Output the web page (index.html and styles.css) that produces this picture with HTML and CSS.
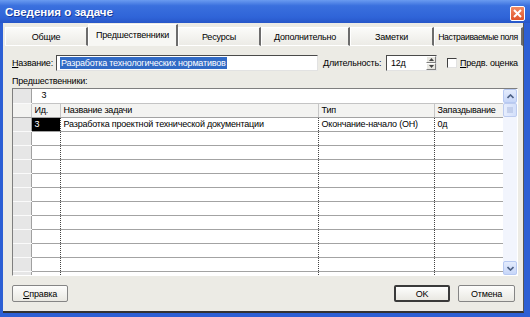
FILE: index.html
```html
<!DOCTYPE html>
<html lang="ru">
<head>
    <meta charset="UTF-8">
    <meta name="viewport" content="width=device-width, initial-scale=1.0">
    <title>Сведения о задаче</title>
    <link rel="stylesheet" href="styles.css">
</head>
<body>
    <div class="window">
        <div class="titlebar">
            <h1>Сведения о задаче</h1>
            <button class="close-button">
                <svg width="9" height="9" viewBox="0 0 9 9"><path d="M1 1L8 8M8 1L1 8" stroke="#fff" stroke-width="2"/></svg>
            </button>
        </div>
        <div class="client">
            <div class="tabs">
                <div class="tab tab-general">Общие</div>
                <div class="tab tab-pred active">Предшественники</div>
                <div class="tab tab-res">Ресурсы</div>
                <div class="tab tab-extra">Дополнительно</div>
                <div class="tab tab-notes">Заметки</div>
                <div class="tab tab-custom">Настраиваемые поля</div>
            </div>
            <div class="page">
                <div class="name-row">
                    <label class="name-label"><u>Н</u>азвание:</label>
                    <div class="field name-field"><span class="selected">Разработка технологических нормативов</span></div>
                    <label class="dur-label"><u>Д</u>лительность:</label>
                    <div class="field spin">
                        <span class="spin-value">12д</span>
                        <div class="spin-buttons">
                            <span class="spin-btn"><svg width="5" height="3" viewBox="0 0 5 3"><path d="M0 3L2.5 0L5 3Z" fill="#444"/></svg></span>
                            <span class="spin-btn"><svg width="5" height="3" viewBox="0 0 5 3"><path d="M0 0L2.5 3L5 0Z" fill="#444"/></svg></span>
                        </div>
                    </div>
                    <span class="checkbox"></span>
                    <label class="est-label"><u>П</u>редв. оценка</label>
                </div>
                <div class="caption">Пре<u>д</u>шественники:</div>
                <div class="grid">
                    <div class="grid-body">
                        <table>
                            <colgroup>
                                <col class="c-head"><col class="c-id"><col class="c-name"><col class="c-type"><col class="c-lag">
                            </colgroup>
                            <tr class="edit-row">
                                <td class="rowhead"></td>
                                <td class="edit" colspan="4">3</td>
                            </tr>
                            <tr class="header-row">
                                <td class="rowhead"></td>
                                <td>Ид.</td>
                                <td>Название задачи</td>
                                <td>Тип</td>
                                <td class="last">Запаздывание</td>
                            </tr>
                            <tr>
                                <td class="rowhead"></td>
                                <td class="current">3</td>
                                <td>Разработка проектной технической документации</td>
                                <td>Окончание-начало (ОН)</td>
                                <td class="last">0д</td>
                            </tr>
                            <tr><td class="rowhead"></td><td></td><td></td><td></td><td class="last"></td></tr>
                            <tr><td class="rowhead"></td><td></td><td></td><td></td><td class="last"></td></tr>
                            <tr><td class="rowhead"></td><td></td><td></td><td></td><td class="last"></td></tr>
                            <tr><td class="rowhead"></td><td></td><td></td><td></td><td class="last"></td></tr>
                            <tr><td class="rowhead"></td><td></td><td></td><td></td><td class="last"></td></tr>
                            <tr><td class="rowhead"></td><td></td><td></td><td></td><td class="last"></td></tr>
                            <tr><td class="rowhead"></td><td></td><td></td><td></td><td class="last"></td></tr>
                            <tr><td class="rowhead"></td><td></td><td></td><td></td><td class="last"></td></tr>
                            <tr><td class="rowhead"></td><td></td><td></td><td></td><td class="last"></td></tr>
                            <tr><td class="rowhead"></td><td></td><td></td><td></td><td class="last"></td></tr>
                            <tr><td class="rowhead"></td><td></td><td></td><td></td><td class="last"></td></tr>
                        </table>
                    </div>
                    <div class="scrollbar">
                        <span class="scroll-btn"><svg width="7" height="5" viewBox="0 0 7 5"><path d="M0.5 4L3.5 1L6.5 4" stroke="#4d6185" stroke-width="1.6" fill="none"/></svg></span>
                        <span class="scroll-thumb"><svg width="6" height="7" viewBox="0 0 6 7"><path d="M0 1H6M0 3H6M0 5H6" stroke="#aab9dc" stroke-width="1"/></svg></span>
                        <span class="scroll-track"></span>
                        <span class="scroll-btn"><svg width="7" height="5" viewBox="0 0 7 5"><path d="M0.5 1L3.5 4L6.5 1" stroke="#4d6185" stroke-width="1.6" fill="none"/></svg></span>
                    </div>
                </div>
            </div>
            <div class="buttons">
                <button class="btn btn-help"><u>С</u>правка</button>
                <button class="btn btn-ok">OK</button>
                <button class="btn btn-cancel">Отмена</button>
            </div>
        </div>
    </div>
</body>
</html>
```

FILE: styles.css
```css
* {
    margin: 0;
    padding: 0;
    box-sizing: border-box;
    font-family: "Liberation Sans", Arial, sans-serif;
}
body {
    background-color: #2f62d6;
    overflow: hidden;
    font-size: 9px;
    letter-spacing: -0.2px;
    color: #000;
    white-space: nowrap;
}
.window {
    width: 530px;
    height: 317px;
    display: flex;
    flex-direction: column;
    background: #2d5fd4;
}
.titlebar {
    height: 23px;
    padding: 0 5px 0 5px;
    display: flex;
    justify-content: space-between;
    align-items: center;
    background: linear-gradient(#6a9bf0, #3a70de 25%, #2f64d8 75%, #2756c8);
}
.titlebar h1 {
    font-size: 11.5px;
    font-weight: bold;
    letter-spacing: 0;
    color: #fff;
    text-shadow: 1px 1px 0 #163a9a;
}
.close-button {
    width: 15px;
    height: 15px;
    margin-top: 3px;
    border: 1px solid #fff;
    border-radius: 2px;
    background: linear-gradient(#f28a63, #e0542b);
    display: flex;
    align-items: center;
    justify-content: center;
}
.client {
    flex: 1;
    margin: 0 6px 4px 3px;
    background: #ecebe5;
    border-right: 1px solid #555;
    border-bottom: 2px solid #333;
    display: flex;
    flex-direction: column;
}
.tabs {
    height: 23px;
    padding-left: 2px;
    display: flex;
    align-items: flex-end;
}
.tab {
    height: 19px;
    line-height: 18px;
    text-align: center;
    overflow: hidden;
    background: linear-gradient(#fbfbf9, #ecebe6);
    border-top: 1px solid #fff;
    border-left: 1px solid #fff;
    border-right: 2px solid #6c6c6c;
    border-bottom: 1px solid #fff;
}
.tab.active {
    height: 22px;
    line-height: 20px;
    background: #f7f7f4;
    border-bottom: none;
}
.tab-general { width: 83px; }
.tab-pred { width: 90px; }
.tab-res { width: 83px; }
.tab-extra { width: 89px; }
.tab-notes { width: 84px; }
.tab-custom {
    width: 89px;
    font-size: 8.7px;
    letter-spacing: -0.4px;
}
.page {
    padding: 9px 5px 0 9px;
    display: flex;
    flex-direction: column;
}
.name-row {
    height: 16px;
    display: flex;
    align-items: center;
}
.field {
    height: 16px;
    background: #fff;
    border: 1px solid;
    border-color: #4a4a4a #e2e2e2 #e2e2e2 #4a4a4a;
    display: flex;
    align-items: center;
}
.name-label { width: 44px; }
.name-field {
    width: 262px;
    padding-left: 3px;
}
.selected {
    background: #316ac5;
    color: #fff;
    line-height: 12px;
    padding: 0 1px;
}
.dur-label {
    margin-left: 5px;
    width: 63px;
}
.spin {
    width: 51px;
    padding-left: 4px;
    justify-content: space-between;
}
.spin-buttons {
    width: 10px;
    height: 14px;
    display: flex;
    flex-direction: column;
}
.spin-btn {
    flex: 1;
    background: #e8e7e1;
    border: 1px solid;
    border-color: #fff #808080 #808080 #fff;
    display: flex;
    align-items: center;
    justify-content: center;
}
.checkbox {
    width: 10px;
    height: 10px;
    margin-left: 10px;
    background: #fff;
    border: 1px solid;
    border-color: #404040 #e2e2e2 #e2e2e2 #404040;
}
.est-label { margin-left: 3px; }
.caption {
    margin-top: 5px;
    height: 11px;
    line-height: 11px;
}
.grid {
    margin-top: 1px;
    height: 188px;
    display: flex;
    background: #fff;
    border: 1px solid;
    border-color: #7f7f7f #fff #fff #7f7f7f;
    overflow: hidden;
}
.grid-body {
    width: 490px;
    overflow: hidden;
}
table {
    width: 490px;
    border-collapse: collapse;
    table-layout: fixed;
}
.c-head { width: 18px; }
.c-id { width: 29px; }
.c-name { width: 258px; }
.c-type { width: 116px; }
.c-lag { width: 69px; }
td {
    height: 14px;
    padding: 0 3px;
    overflow: hidden;
    line-height: 13px;
    border-bottom: 1px solid #a3a3a3;
    border-right: 1px dotted #444;
}
td.last {
    border-right: none;
}
td.rowhead {
    background: #e6e6e6;
    border-bottom: 1px solid #fafafa;
    border-right: 1px solid #a0a0a0;
}
.edit-row td.edit {
    padding-left: 10px;
    border-right: none;
    border-bottom: 1px solid #c4c4c4;
}
.header-row td {
    background: #f3f3f1;
    border-right: 1px solid #c6c6c6;
    border-bottom: 1px solid #a3a3a3;
}
.header-row td.last {
    border-right: none;
}
td.current {
    background: #000;
    color: #fff;
}
.scrollbar {
    width: 14px;
    display: flex;
    flex-direction: column;
    background: #f2f5fd;
}
.scroll-btn {
    height: 14px;
    background: linear-gradient(#e4ecfd, #c7d6f8);
    border: 1px solid #b7c9f2;
    border-radius: 2px;
    display: flex;
    align-items: center;
    justify-content: center;
}
.scroll-thumb {
    height: 14px;
    background: linear-gradient(90deg, #e6edfd, #d3dffa);
    border: 1px solid #bccbef;
    border-radius: 2px;
    display: flex;
    align-items: center;
    justify-content: center;
}
.scroll-track {
    flex: 1;
}
.buttons {
    margin-top: 9px;
    padding: 0 8px 0 9px;
    display: flex;
    gap: 8px;
}
.btn {
    height: 17px;
    font-size: 9px;
    letter-spacing: -0.2px;
    background: linear-gradient(#fdfdfc, #e9e8e2);
    border: 1px solid #858585;
    border-radius: 2px;
}
.btn-help {
    width: 56px;
    margin-right: auto;
}
.btn-ok {
    width: 56px;
    border: 2px solid #3a3a3a;
}
.btn-cancel { width: 57px; }
```
